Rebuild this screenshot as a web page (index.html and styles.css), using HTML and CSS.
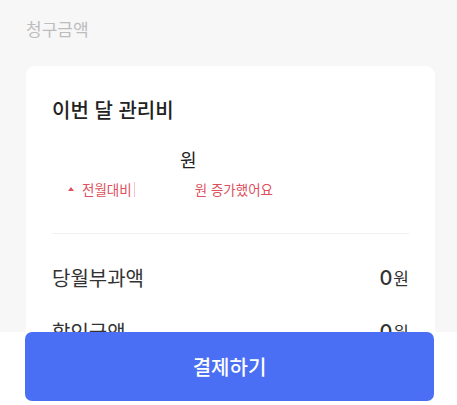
FILE: index.html
```html
<!DOCTYPE html>
<html lang="ko">
<head>
    <meta charset="UTF-8">
    <meta name="viewport" content="width=device-width, initial-scale=1.0">
    <title>청구금액</title>
    <link rel="stylesheet" href="styles.css">
</head>
<body>

    <div class="page">
        <h2 class="heading">청구금액</h2>

        <div class="card">
            <h3 class="card-title">이번 달 관리비</h3>
            <div class="total">
                <span class="total-num"></span><span class="total-unit">원</span>
            </div>
            <div class="diff">
                <span class="arrow"></span>
                <span>전월대비</span><span class="diff-num"></span><span>원 증가했어요</span>
            </div>

            <div class="divider"></div>

            <div class="row">
                <span class="row-label">당월부과액</span>
                <span class="row-value"><b>0</b>원</span>
            </div>
            <div class="row">
                <span class="row-label">할인금액 <span class="chev">&gt;</span></span>
                <span class="row-value"><b>0</b>원</span>
            </div>
        </div>
    </div>

    <div class="bottom-bar">
        <button class="pay-btn">결제하기</button>
    </div>

</body>
</html>
```

FILE: styles.css
```css
body {
    margin: 0;
    background: #f7f7f7;
    font-family: "Noto Sans CJK KR", "Noto Sans", sans-serif;
    color: #222;
    overflow: hidden;
}
.page {
    padding: 16px 22px 0 26px;
}
.heading {
    margin: 0;
    font-size: 17px;
    line-height: 25px;
    font-weight: 400;
    color: #bdbdbd;
}
.card {
    margin-top: 25px;
    background: white;
    border-radius: 9px;
    padding: 30px 26px 20px 26px;
}
.card-title {
    margin: 0;
    font-size: 20px;
    line-height: 28px;
    font-weight: 500;
    color: #222;
}
.total {
    margin-top: 22px;
    font-size: 18px;
    line-height: 26px;
    display: flex;
}
.total-num {
    display: inline-block;
    width: 128px;
}
.diff {
    margin-top: 8px;
    display: flex;
    align-items: center;
    font-size: 13.5px;
    line-height: 18px;
    color: #dc515d;
}
.arrow {
    width: 0;
    height: 0;
    border-left: 3px solid transparent;
    border-right: 3px solid transparent;
    border-bottom: 4px solid #dc515d;
    margin: 0 8px 0 16px;
}
.diff-num {
    display: inline-block;
    width: 60px;
    height: 15px;
    border-left: 1px solid #f4c4c8;
    margin-left: 2px;
}
.divider {
    margin-top: 35px;
    height: 1px;
    background: #f0f0f0;
}
.row {
    display: flex;
    justify-content: space-between;
    align-items: center;
    height: 26px;
    margin-top: 30px;
    font-size: 20px;
    color: #333;
}
.row + .row {
    margin-top: 28px;
}
.chev {
    font-size: 13px;
    color: #999;
}
.row-value {
    font-size: 17px;
    color: #333;
}
.row-value b {
    font-family: "Inter", "Noto Sans", sans-serif;
    font-size: 20px;
    font-weight: 500;
    margin-right: 1px;
}
.bottom-bar {
    position: fixed;
    left: 0;
    right: 0;
    bottom: 0;
    height: 73px;
    background: white;
    padding: 0 23px 0 25px;
}
.pay-btn {
    width: 100%;
    height: 69px;
    border: none;
    border-radius: 7px;
    background: #4a6ff4;
    color: white;
    font-family: "Noto Sans CJK KR", "Noto Sans", sans-serif;
    font-size: 20px;
    font-weight: 500;
    cursor: pointer;
}
```
